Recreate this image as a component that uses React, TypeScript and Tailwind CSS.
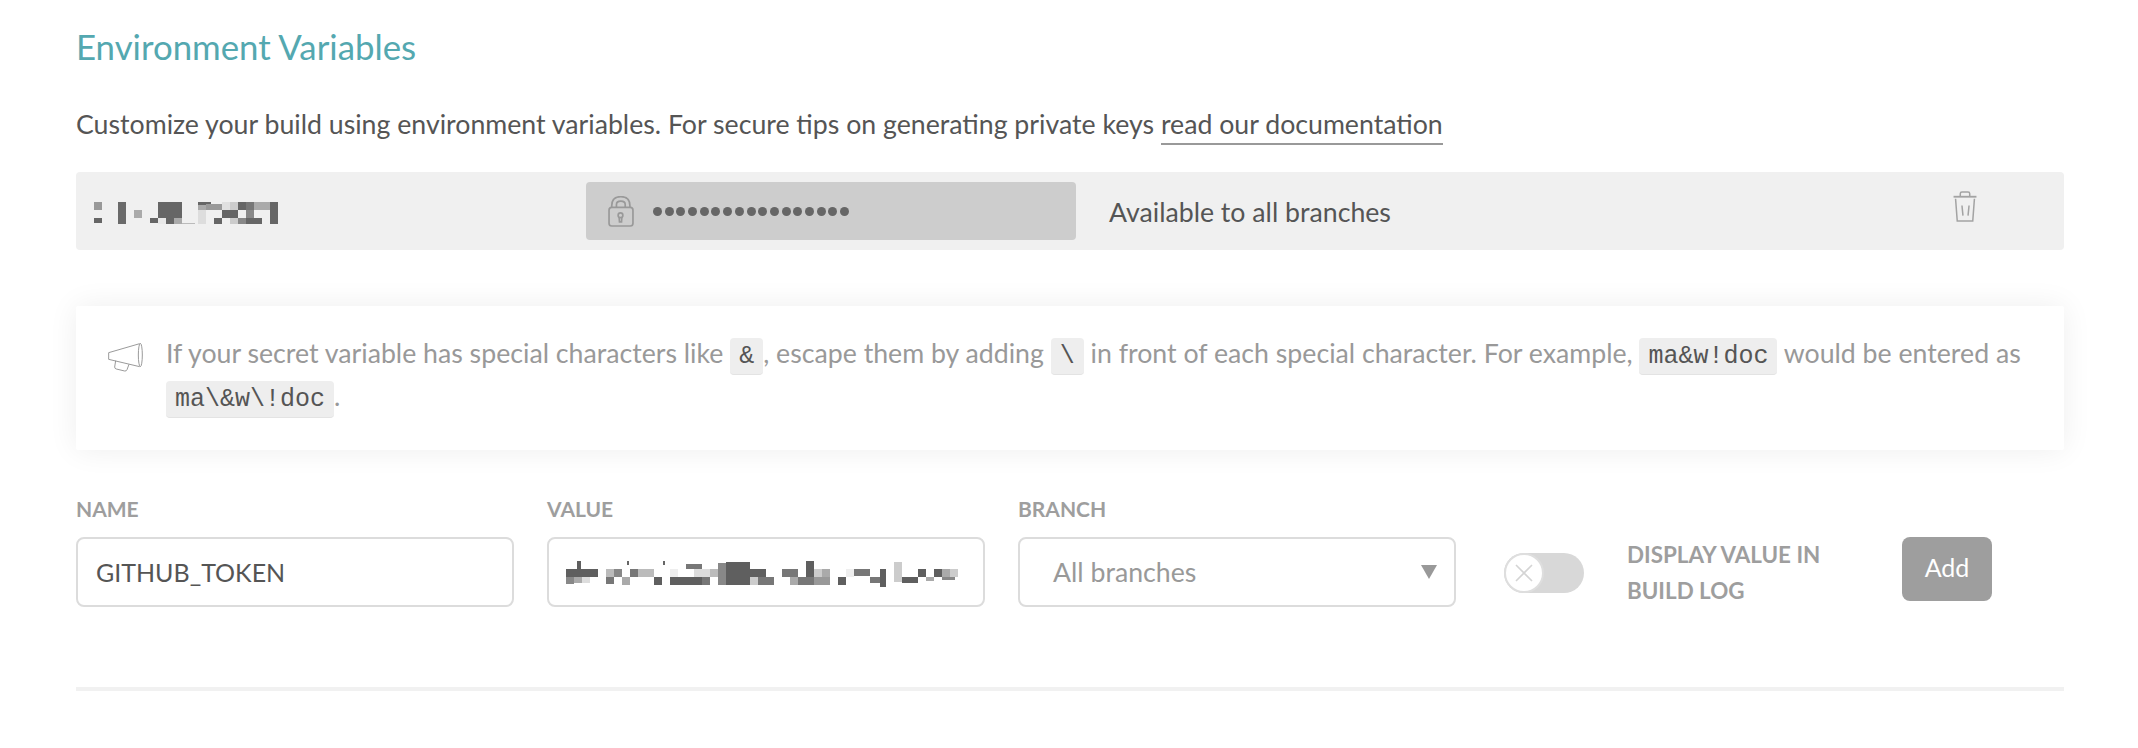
const nameCells = [
  [42, 66, 24, 24, "#999"], [42, 114, 24, 16, "#666"], [114, 66, 24, 66, "#6a6a6a"], [162, 90, 24, 24, "#aaa"],
  [210, 114, 24, 16, "#666"], [234, 66, 72, 48, "#666"], [258, 114, 24, 18, "#666"], [282, 114, 24, 18, "#aaa"],
  [234, 114, 24, 18, "#e8e8e8"], [306, 130, 40, 3, "#bbb"], [354, 66, 40, 8, "#666"], [354, 75, 24, 15, "#aaa"],
  [378, 72, 48, 18, "#999"], [426, 66, 24, 24, "#e0e0e0"], [450, 66, 24, 24, "#ccc"], [474, 66, 24, 24, "#666"],
  [498, 66, 24, 24, "#777"], [522, 66, 48, 24, "#aaa"], [570, 66, 24, 66, "#666"], [354, 90, 24, 42, "#ddd"],
  [426, 90, 48, 24, "#666"], [402, 114, 24, 18, "#666"], [450, 114, 24, 18, "#ccc"], [474, 114, 24, 18, "#888"],
  [498, 90, 24, 24, "#888"], [498, 114, 48, 18, "#666"],
] as const

const valueCells = [
  [96, 80, 12, 24, "#5f5f5f"], [62, 104, 96, 24, "#5f5f5f"], [62, 128, 24, 22, "#888"], [86, 128, 24, 20, "#aaa"], [110, 128, 24, 18, "#ddd"],
  [182, 104, 24, 24, "#bbb"], [206, 104, 24, 24, "#888"], [182, 128, 24, 22, "#777"], [230, 128, 24, 24, "#aaa"], [246, 80, 6, 12, "#666"],
  [254, 104, 24, 24, "#777"], [278, 104, 48, 24, "#bbb"], [326, 128, 24, 24, "#5f5f5f"], [354, 80, 6, 14, "#666"],
  [374, 128, 96, 24, "#5f5f5f"], [374, 104, 24, 24, "#eee"], [422, 90, 48, 14, "#777"], [446, 104, 48, 24, "#ddd"], [470, 128, 24, 24, "#777"],
  [494, 104, 24, 24, "#bbb"], [518, 88, 24, 40, "#888"], [518, 128, 24, 24, "#888"], [542, 84, 24, 68, "#5f5f5f"], [566, 84, 48, 68, "#5f5f5f"],
  [614, 104, 48, 24, "#5f5f5f"], [614, 128, 24, 24, "#ccc"], [638, 128, 48, 24, "#777"], [710, 104, 48, 24, "#777"], [734, 128, 24, 24, "#aaa"],
  [758, 128, 48, 24, "#777"], [782, 82, 24, 46, "#5f5f5f"], [806, 104, 24, 24, "#ccc"], [830, 104, 24, 24, "#aaa"], [806, 128, 48, 24, "#999"],
  [878, 128, 24, 24, "#5f5f5f"], [902, 104, 24, 24, "#eee"], [926, 104, 48, 22, "#777"], [974, 128, 48, 20, "#777"], [1006, 104, 16, 54, "#5f5f5f"],
  [1046, 84, 24, 60, "#ccc"], [1070, 128, 48, 18, "#5f5f5f"], [1118, 104, 24, 24, "#5f5f5f"], [1142, 128, 24, 14, "#aaa"], [1166, 104, 24, 24, "#5f5f5f"],
  [1190, 104, 24, 24, "#aaa"], [1214, 104, 24, 24, "#ccc"], [1190, 128, 40, 10, "#888"],
] as const

function Megaphone() {
  return (
    <svg width="36" height="30" viewBox="40 33 108 90" fill="none" stroke="#8a8a8a" strokeWidth="2.6" className="shrink-0">
      <path d="M135 38 L42 65 V85 L135 107" />
      <ellipse cx="137" cy="72" rx="6" ry="35" />
      <path d="M63 89 L60 108 Q60 113 65 114 L90 120 Q95 121 97 116 L103 100" />
    </svg>
  )
}

function Trash() {
  return (
    <svg width="24" height="31" viewBox="71 32 70 92" fill="none" stroke="#a3a3a3" strokeWidth="4.5">
      <path d="M72 49 H140" strokeWidth="5.5" />
      <path d="M92 47 V40 Q92 35 97 35 H115 Q120 35 120 40 V47" />
      <path d="M78 55 L83 121 H129 L134 55" />
      <path d="M97 75 L100 105 M118 75 L115 105" />
    </svg>
  )
}

function Lock() {
  return (
    <svg width="26" height="31" viewBox="55 41 77 92" fill="none" stroke="#999" strokeWidth="5">
      <rect x="58" y="75" width="71" height="55" rx="8" />
      <path d="M66 75 V70 Q66 43 93 43 Q120 43 120 70 V75" />
      <path d="M80 75 V66 Q80 56 93 56 Q106 56 106 66 V75" />
      <circle cx="92" cy="98" r="7" />
      <path d="M88 104 L89 118 H95 L96 104" />
    </svg>
  )
}

function Code({ children }: { children: string }) {
  return (
    <code className="inline-block h-[37px] rounded-[4px] border-b border-[#e3e3e3] bg-[#eeeeee] px-[9px] align-middle font-['Liberation_Mono',monospace] text-[25px] leading-[37px] text-[#555]">
      {children}
    </code>
  )
}

export default function App() {
  return (
    <div className="h-[748px] w-[2138px] overflow-hidden bg-white font-['Lato',sans-serif]">
      <div className="ml-[76px] w-[1988px]">
        {/* Heading */}
        <h2 className="pt-[24px] text-[34.8px] leading-[46px] text-[#54a8b0]">Environment Variables</h2>
        <p className="mt-[36px] text-[26.7px] leading-[36px] text-[#555]">
          Customize your build using environment variables. For secure tips on generating private keys{" "}
          <a className="border-b-2 border-[#999] pb-[3px]">read our documentation</a>
        </p>

        {/* Saved variable */}
        <div className="mt-[30px] flex h-[78px] items-center rounded-[4px] bg-[#f0f0f0]">
          <div className="w-[510px] pl-[4px] pt-[8px]">
            <svg width="220" height="70" viewBox="0 0 660 210" className="block" shapeRendering="crispEdges">
              {nameCells.map(([x, y, w, h, c], i) => (
                <rect key={i} x={x} y={y} width={w} height={h} fill={c} />
              ))}
            </svg>
          </div>
          <div className="flex h-[58px] w-[490px] items-center rounded-[4px] bg-[#cdcdcd] pl-[22px]">
            <Lock />
            <div className="ml-[19px] flex gap-[2.7px]">
              {Array.from({ length: 17 }).map((_, i) => (
                <span key={i} className="h-[9px] w-[9px] rounded-full bg-[#666]" />
              ))}
            </div>
          </div>
          <span className="ml-[33px] pt-[2px] text-[26.7px] text-[#555]">Available to all branches</span>
          <div className="mb-[10px] ml-auto mr-[87px]">
            <Trash />
          </div>
        </div>

        {/* Note */}
        <div className="mt-[56px] flex h-[144px] rounded-[2px] bg-white pl-[32px] pr-[30px] pt-[26px] shadow-[0_0_30px_rgba(0,0,0,0.07)]">
          <div className="pt-[10px]">
            <Megaphone />
          </div>
          <p className="ml-[22px] text-[26.7px] leading-[43px] text-[#999]">
            If your secret variable has special characters like <Code>&amp;</Code>, escape them by adding{" "}
            <Code>\</Code> in front of each special character. For example, <Code>ma&amp;w!doc</Code> would be entered
            as <Code>ma\&amp;w\!doc</Code>.
          </p>
        </div>

        {/* Add form */}
        <div className="mt-[41px] flex items-start">
          <div className="w-[438px]">
            <div className="text-[21px] font-bold leading-[36px] text-[#9e9e9e]">NAME</div>
            <input
              readOnly
              value="GITHUB_TOKEN"
              className="mt-[10px] h-[70px] w-full rounded-[8px] border-2 border-[#dcdcdc] px-[18px] text-[25px] text-[#555] outline-none"
            />
          </div>
          <div className="ml-[33px] w-[438px]">
            <div className="text-[21px] font-bold leading-[36px] text-[#9e9e9e]">VALUE</div>
            <div className="relative mt-[10px] h-[70px] w-full overflow-hidden rounded-[8px] border-2 border-[#dcdcdc]">
              <svg width="450" height="80" viewBox="0 0 1350 240" className="absolute left-[-4px] top-[-5px]" shapeRendering="crispEdges">
                {valueCells.map(([x, y, w, h, c], i) => (
                  <rect key={i} x={x} y={y} width={w} height={h} fill={c} />
                ))}
              </svg>
            </div>
          </div>
          <div className="ml-[33px] w-[438px]">
            <div className="text-[21px] font-bold leading-[36px] text-[#9e9e9e]">BRANCH</div>
            <div className="mt-[10px] flex h-[70px] w-full items-center justify-between rounded-[8px] border-2 border-[#dcdcdc] pl-[33px] pr-[17px] text-[26.7px] text-[#999]">
              <span>All branches</span>
              <svg width="16" height="14" viewBox="0 0 16 14">
                <path d="M0 0 H16 L8 14 Z" fill="#999" />
              </svg>
            </div>
          </div>
          <div className="ml-[48px] mt-[62px] flex h-[40px] w-[80px] items-center rounded-full bg-[#d8d8d8]">
            <div className="flex h-[40px] w-[40px] items-center justify-center rounded-full border-2 border-[#dedede] bg-white">
              <svg width="20" height="20" viewBox="0 0 20 20" stroke="#d4d4d4" strokeWidth="1.6">
                <path d="M2 2 L18 18 M18 2 L2 18" />
              </svg>
            </div>
          </div>
          <div className="ml-[43px] mt-[46px] w-[210px] text-[22.4px] font-bold leading-[36px] text-[#9e9e9e]">
            DISPLAY VALUE IN BUILD LOG
          </div>
          <button className="ml-[65px] mt-[46px] h-[64px] w-[90px] rounded-[8px] bg-[#9e9e9e] pb-[2px] text-[25px] text-white">
            Add
          </button>
        </div>

        <div className="mt-[78px] h-[4px] bg-[#f1f1f1]" />
      </div>
    </div>
  )
}
